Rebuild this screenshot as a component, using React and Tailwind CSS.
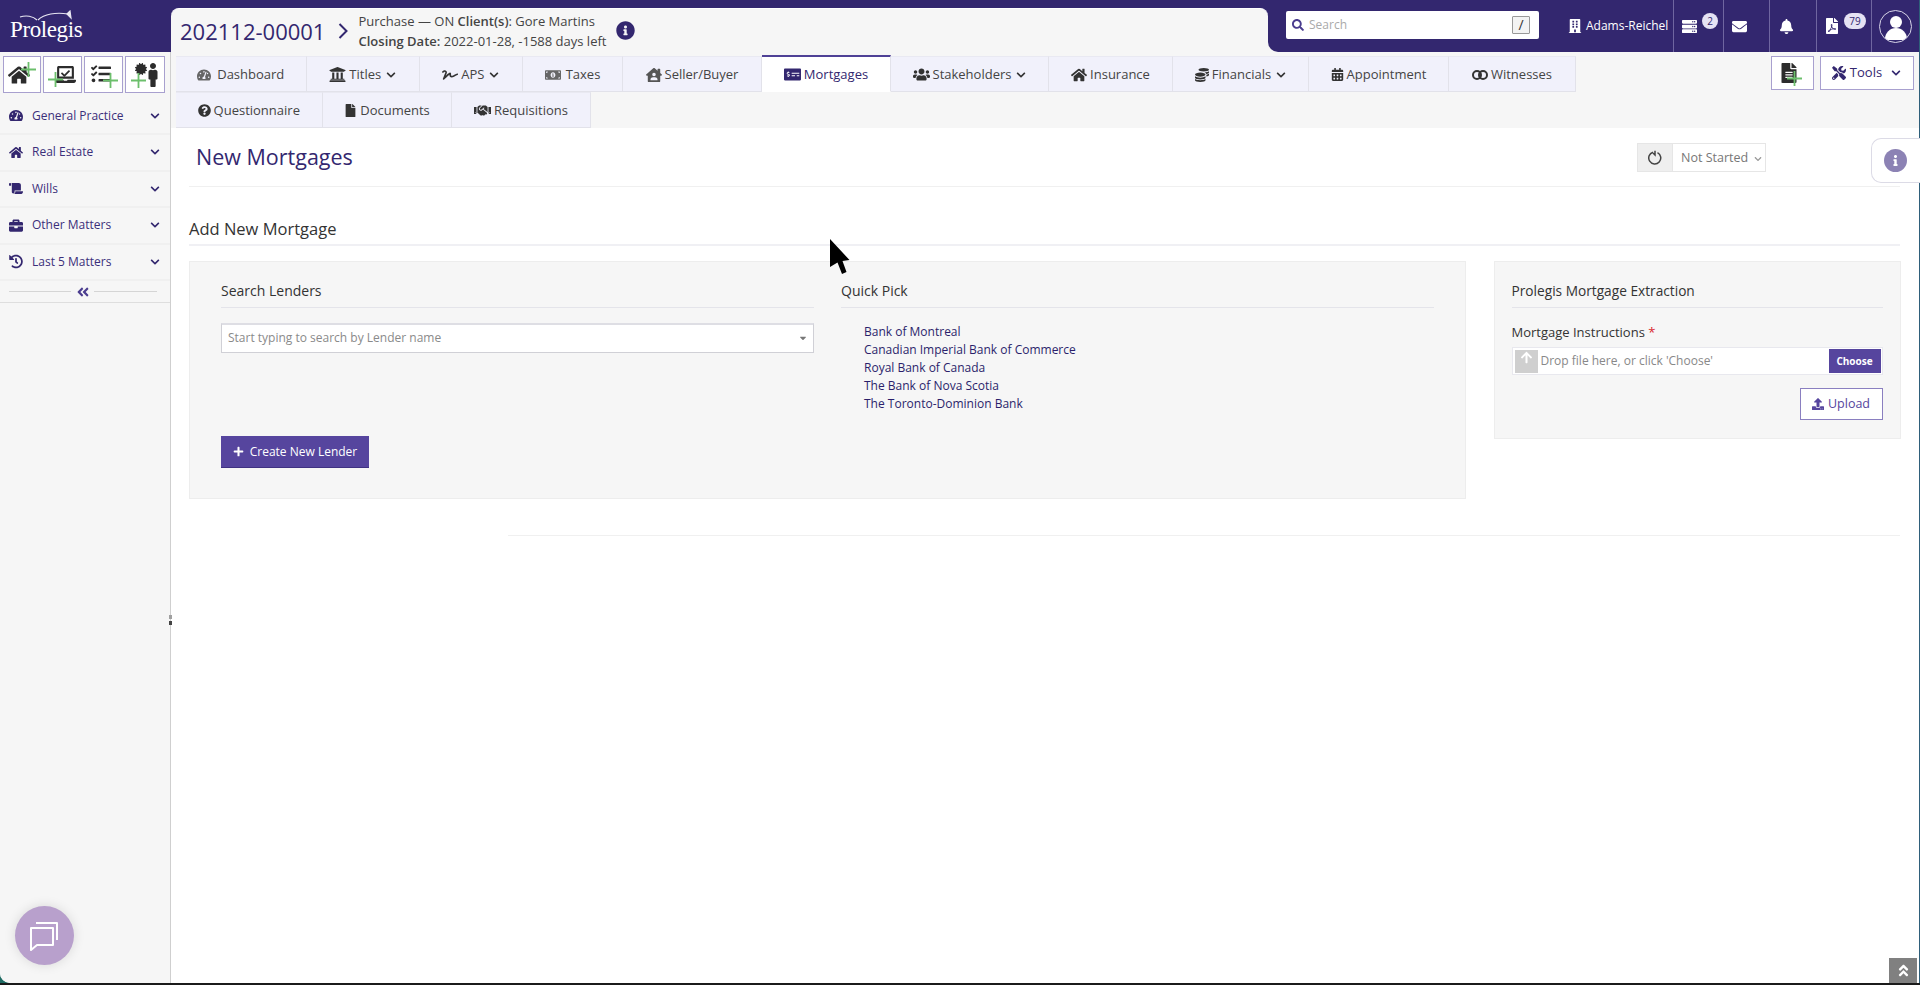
import React from 'react';
import {
  FaTachometerAlt, FaHome, FaScroll, FaBriefcase, FaHistory, FaAngleDoubleLeft, FaChevronDown,
  FaInfoCircle, FaUniversity, FaSignature, FaMoneyBillAlt, FaMoneyCheckAlt, FaUsers, FaCoins, FaCalendarAlt,
  FaQuestionCircle, FaFile, FaHandshake, FaSearch, FaBuilding, FaServer, FaEnvelope, FaBell, FaFilePdf, FaTools,
  FaFileAlt, FaCaretDown, FaPlus, FaUpload, FaAngleDoubleUp, FaTasks, FaMale, FaLaptop, FaInfo, FaArrowUp, FaHouseUser, FaCertificate, FaCheck,
} from 'react-icons/fa';

const Witness = () => (
  <svg width="16" height="12" viewBox="0 0 16 12" fill="none" stroke="#333" strokeWidth="2"><circle cx="5" cy="6" r="4" /><circle cx="11" cy="6" r="4" /></svg>
);

const row1 = [
  { w: 'w-[131.5px]', label: 'Dashboard', icon: <FaTachometerAlt className="text-[14px] text-[#666]" />, gap: 'gap-[6px]' },
  { w: 'w-[112.6px]', label: 'Titles', icon: <FaUniversity className="text-[17px]" />, chev: true },
  { w: 'w-[103.4px]', label: 'APS', icon: <FaSignature className="text-[16px]" />, chev: true },
  { w: 'w-[100px]', label: 'Taxes', icon: <FaMoneyBillAlt className="text-[16px] text-[#666]" />, gap: 'gap-[5px]' },
  { w: 'w-[139px]', label: 'Seller/Buyer', icon: <FaHouseUser className="text-[16px] text-[#555]" /> },
  { w: 'w-[129px]', label: 'Mortgages', icon: <FaMoneyCheckAlt className="text-[17px] text-[#33276f]" />, active: true },
  { w: 'w-[158px]', label: 'Stakeholders', icon: <FaUsers className="text-[17px]" />, chev: true },
  { w: 'w-[124px]', label: 'Insurance', icon: <FaHome className="text-[16px]" /> },
  { w: 'w-[136px]', label: 'Financials', icon: <FaCoins className="text-[14px]" />, chev: true },
  { w: 'w-[140px]', label: 'Appointment', icon: <FaCalendarAlt className="text-[13px]" /> },
  { w: 'w-[127px]', label: 'Witnesses', icon: <Witness /> },
];
const row2 = [
  { w: 'w-[147.5px]', label: 'Questionnaire', icon: <FaQuestionCircle className="text-[13px]" /> },
  { w: 'w-[129px]', label: 'Documents', icon: <FaFile className="text-[13px]" /> },
  { w: 'w-[139px]', label: 'Requisitions', icon: <FaHandshake className="text-[17px]" /> },
];

function Tab({ t }) {
  return (
    <div className={`${t.w} shrink-0 flex items-center justify-center pt-[1px] text-[13px] border-r border-b ${t.gap || 'gap-[3px]'} ${t.active ? 'bg-white text-[#33276f] border-[#e2e2ea] border-t-2 border-t-[#4f4196] border-b-white -mt-[1px] h-[37px]' : 'h-[36px] bg-[#f1f1fb] text-[#444] border-[#e2e2ea] border-t border-t-[#e9e9f2]'}`}>
      <span className={t.active ? 'text-[#33276f] flex' : 'text-[#333] flex'}>{t.icon}</span>
      <span>{t.label}</span>
      {t.chev && <FaChevronDown className="text-[10px] ml-[2px] text-[#333]" />}
    </div>
  );
}

const Green = ({ className }) => (
  <svg className={className} width="15" height="15" viewBox="0 0 15 15"><path d="M7.5 0v15M0 7.5h15" stroke="#6cbf6c" strokeWidth="1.8" /></svg>
);

function Quick({ w, children }) {
  return <div className={`${w} h-[37px] relative flex items-center justify-center bg-white border border-[#a8a0cf] text-[#2c2c2c]`}>{children}</div>;
}

const menu = [
  { label: 'General Practice', icon: <FaTachometerAlt /> },
  { label: 'Real Estate', icon: <FaHome /> },
  { label: 'Wills', icon: <FaScroll /> },
  { label: 'Other Matters', icon: <FaBriefcase /> },
  { label: 'Last 5 Matters', icon: <FaHistory /> },
];

function HeaderCell({ w, children }) {
  return <div className={`${w} h-full relative flex items-center justify-center text-white border-l border-[#6f66a0]`}>{children}</div>;
}

const Badge = ({ className, children }) => (
  <span className={`absolute top-[13px] h-[16px] rounded-full bg-[#e5e2f3] text-[#33276f] text-[10px] flex items-center justify-center ${className}`}>{children}</span>
);

export default function App() {
  return (
    <div className="relative w-full h-[985px] overflow-hidden bg-[#1b1b1b] text-[#333] font-['Open_Sans',sans-serif]">
      <div className="absolute left-0 bottom-[2px] w-[16px] h-[12px] bg-[#1f6b63]" />
      <div className="relative h-[983px] flex flex-col bg-white overflow-hidden rounded-bl-[10px] border-r border-[#2f5f7a]">
        {/* header */}
        <div className="h-[52px] shrink-0 flex bg-[#f6f6f6]">
          <div className="w-[171px] shrink-0 bg-[#33276f] relative flex items-center pl-[10px] pt-[6px] text-white">
            <svg className="absolute left-[18px] top-[10px]" width="56" height="14" viewBox="0 0 56 14" fill="none" stroke="#e8e6f2" strokeWidth="1.2">
              <path d="M2 7 C8 5 15 6 19 10" />
              <path d="M20 10 C26 4 38 2 50 4" />
              <path d="M49 4 L52 1 L53 8 Z" fill="#e8e6f2" />
            </svg>
            <span className="font-['Liberation_Serif',serif] text-[23px] tracking-[-0.4px] leading-none">Prolegis</span>
          </div>
          <div className="w-[1097px] shrink-0 bg-[#33276f] pt-[8px]">
            <div className="h-[44px] bg-[#f6f6f6] rounded-t-[8px] flex items-center pl-[9px] border-t border-white">
              <span className="text-[22px] leading-none text-[#33276f] w-[158px] shrink-0 whitespace-nowrap">202112-00001</span>
              <svg className="shrink-0" width="10" height="16" viewBox="0 0 10 16" fill="none" stroke="#33276f" strokeWidth="2"><path d="M1.5 1l7 7-7 7" /></svg>
              <div className="ml-[10.5px] text-[13px] leading-[20px] text-[#444] w-[257px] shrink-0">
                <div>Purchase — ON <b className="font-semibold">Client(s)</b>: Gore Martins</div>
                <div><b className="font-semibold">Closing Date:</b> 2022-01-28, -1588 days left</div>
              </div>
              <FaInfoCircle className="text-[19px] text-[#33276f] shrink-0" />
            </div>
          </div>
          <div className="flex-1 bg-[#33276f] rounded-bl-[10px] flex items-stretch pl-[18px]">
            <div className="w-[253px] h-[28px] mt-[11px] bg-white rounded-[2px] flex items-center pl-[6px] pr-[9px] shrink-0">
              <FaSearch className="text-[12px] text-[#4b3d8f]" />
              <span className="ml-[5px] text-[12px] text-[#aaa] flex-1">Search</span>
              <span className="w-[18px] h-[18px] border border-[#999] bg-[#f3f3f3] rounded-[1px] flex items-center justify-center text-[14px] leading-none text-[#333]">/</span>
            </div>
            <div className="w-[134px] shrink-0 flex items-center pl-[29px] gap-[4px] text-white text-[12px]">
              <FaBuilding className="text-[14px] shrink-0" />
              <span>Adams-Reichel</span>
            </div>
            <HeaderCell w="w-[50px]"><FaServer className="text-[15px] -ml-[18px]" /><Badge className="w-[16px] left-[28px]">2</Badge></HeaderCell>
            <HeaderCell w="w-[46px]"><FaEnvelope className="text-[15px] -ml-[14px]" /></HeaderCell>
            <HeaderCell w="w-[47px]"><FaBell className="text-[15px] -ml-[14px]" /></HeaderCell>
            <HeaderCell w="w-[55px]"><FaFilePdf className="text-[16px] -ml-[24px]" /><Badge className="w-[22px] left-[27px]">79</Badge></HeaderCell>
            <HeaderCell w="flex-1">
              <div className="w-[33px] h-[33px] rounded-full border border-[#d8d5e8] overflow-hidden flex items-end justify-center relative">
                <div className="absolute top-[5px] left-[10px] w-[12px] h-[12px] rounded-full bg-white" />
                <div className="w-[22px] h-[12px] rounded-t-full bg-white mb-[2px]" />
              </div>
            </HeaderCell>
          </div>
        </div>

        <div className="flex-1 flex min-h-0">
          {/* sidebar */}
          <aside className="w-[171px] shrink-0 bg-[#f6f6f6] border-r border-[#cfcfcf] pt-[4px] relative">
            <div className="flex pl-[3px] gap-[2px]">
              <Quick w="w-[38px]"><FaHome className="text-[22px] -ml-[6px]" /><Green className="absolute right-[4px] top-[5px]" /></Quick>
              <Quick w="w-[39px]">
                <FaLaptop className="text-[21px] ml-[6px]" />
                <FaCheck className="absolute left-[17px] top-[12px] text-[9px] text-[#2c2c2c]" />
                <Green className="absolute left-[4px] bottom-[5px]" />
              </Quick>
              <Quick w="w-[39px]"><FaTasks className="text-[20px] -ml-[6px] -mt-[2px]" /><Green className="absolute right-[4px] bottom-[4px]" /></Quick>
              <Quick w="w-[40px]">
                <FaCertificate className="absolute left-[9px] top-[6px] text-[12px]" />
                <FaMale className="text-[24px] ml-[16px]" />
                <Green className="absolute left-[5px] bottom-[4px]" />
              </Quick>
            </div>
            <div className="mt-[5.5px]">
              {menu.map((m) => (
                <div key={m.label} className="h-[36.5px] border-b-2 border-[#f0f0f0] flex items-center pl-[9px] pr-[10px] text-[#3b2f7a]">
                  <span className="w-[14px] flex justify-center text-[15px] text-[#33276f]">{m.icon}</span>
                  <span className="ml-[9px] text-[12px] flex-1">{m.label}</span>
                  <FaChevronDown className="text-[10px] text-[#33276f]" />
                </div>
              ))}
            </div>
            <div className="h-[22px] border-b border-[#dedede] flex items-center pl-[9px]">
              <div className="w-[62px] h-px bg-[#d5d5d5]" />
              <div className="w-[23px] flex justify-center"><FaAngleDoubleLeft className="text-[14px] text-[#4b3d8f]" /></div>
              <div className="w-[63px] h-px bg-[#d5d5d5]" />
            </div>
            <span className="absolute -right-[2px] top-[563px] w-[3px] h-[4px] bg-[#a0a0a0]" />
            <span className="absolute -right-[2px] top-[569px] w-[3px] h-[4px] bg-[#444]" />
          </aside>

          {/* main */}
          <main className="flex-1 min-w-0 flex flex-col">
            <div className="h-[76px] shrink-0 bg-[#f6f6f6] flex pt-[4px] pl-[4.5px]">
              <div className="w-[1401px] shrink-0">
                <div className="flex">{row1.map((t) => <Tab key={t.label} t={t} />)}</div>
                <div className="flex">{row2.map((t) => <Tab key={t.label} t={t} />)}</div>
              </div>
              <div className="flex gap-[6px] ml-[194px]">
                <div className="relative w-[43px] h-[34px] bg-white border border-[#a8a0cf] flex items-center justify-center">
                  <FaFileAlt className="text-[20px] text-[#2c2c2c] -ml-[6px]" />
                  <Green className="absolute right-[11px] bottom-[3px]" />
                </div>
                <div className="w-[94px] h-[34px] bg-white border border-[#a8a0cf] flex items-center justify-center gap-[4px] text-[13px] text-[#33276f]">
                  <FaTools className="text-[14px]" /><span>Tools</span><FaChevronDown className="text-[10px] ml-[5px]" />
                </div>
              </div>
            </div>

            <div className="flex-1 bg-white pl-[18px] pr-[19px]">
              <div className="h-[59px] border-b border-[#f0f0f0] flex items-center justify-between pl-[7px] pr-[134px]">
                <h1 className="text-[21.5px] font-normal text-[#33276f] leading-none -mt-[1px]">New Mortgages</h1>
                <div className="flex h-[29px] mt-[1px] border border-[#e6e6e6]">
                  <div className="w-[35px] bg-[#efefef] border-r border-[#e6e6e6] flex items-center justify-center">
                    <svg width="14" height="15" viewBox="0 0 14 15" fill="none" stroke="#444" strokeWidth="1.5">
                      <path d="M5 2.2A6 6 0 1 0 9.5 2.6" />
                      <path d="M7 0.8v4.2l-2-2" />
                    </svg>
                  </div>
                  <div className="w-[92px] flex items-center pl-[8px] pt-[2px] text-[12.5px] text-[#777] bg-white">
                    <span className="flex-1">Not Started</span>
                    <FaChevronDown className="text-[8px] mr-[3px] text-[#999]" />
                  </div>
                </div>
              </div>

              <div className="h-[59px] border-b-2 border-[#f0f0f4] flex items-end pb-[3px]">
                <h2 className="text-[16.5px] font-normal text-[#333] leading-[24px]">Add New Mortgage</h2>
              </div>

              <div className="flex items-start gap-[27.5px] mt-[15px]">
                <section className="w-[1277px] shrink-0 h-[238px] bg-[#f6f6f6] border border-[#ededed] px-[31px] flex gap-[27px]">
                  <div className="w-[593px] shrink-0">
                    <h3 className="h-[46px] pt-[18px] border-b border-[#e4e4ea] text-[14px] font-normal text-[#333] leading-[21px]">Search Lenders</h3>
                    <div className="mt-[15px] h-[30px] bg-white border border-[#d0d0d6] border-t-2 border-t-[#dedee4] flex items-center pl-[6px] pr-[5px] pb-[2px]">
                      <span className="text-[12px] text-[#8a8a8a] flex-1">Start typing to search by Lender name</span>
                      <FaCaretDown className="text-[10px] text-[#777]" />
                    </div>
                    <button className="mt-[83px] w-[148px] h-[32px] bg-[#56459e] text-white text-[12px] flex items-center justify-center gap-[6px] border-b border-[#3f3182]">
                      <FaPlus className="text-[11px]" />Create New Lender
                    </button>
                  </div>
                  <div className="w-[593px] shrink-0">
                    <h3 className="h-[46px] pt-[18px] border-b border-[#e4e4ea] text-[14px] font-normal text-[#333] leading-[21px]">Quick Pick</h3>
                    <ul className="mt-[15px] pl-[23px] text-[12px] leading-[18px] text-[#2b1f6b]">
                      <li>Bank of Montreal</li>
                      <li>Canadian Imperial Bank of Commerce</li>
                      <li>Royal Bank of Canada</li>
                      <li>The Bank of Nova Scotia</li>
                      <li>The Toronto-Dominion Bank</li>
                    </ul>
                  </div>
                </section>

                <section className="w-[407px] shrink-0 h-[178px] bg-[#f6f6f6] border border-[#ededed] px-[17px]">
                  <h3 className="h-[46px] pt-[18px] border-b border-[#e4e4ea] text-[13.7px] font-normal text-[#333] leading-[21px]">Prolegis Mortgage Extraction</h3>
                  <div className="mt-[15px] text-[13px] leading-[18px] text-[#333]">Mortgage Instructions <span className="text-[#d9262c]">*</span></div>
                  <div className="mt-[6px] h-[28px] bg-white border border-[#e8e8ee] flex items-center pl-[2px] pr-[1px]">
                    <div className="w-[23px] h-[23px] bg-[#cfcfcf] flex items-start justify-center shrink-0"><FaArrowUp className="text-[13px] text-white mt-[1px]" /></div>
                    <span className="ml-[3px] text-[12px] text-[#888] flex-1">Drop file here, or click 'Choose'</span>
                    <button className="w-[52px] h-[24px] bg-[#56459e] text-white text-[10px] font-bold">Choose</button>
                  </div>
                  <div className="flex justify-end mt-[13px]">
                    <button className="w-[83px] h-[32px] bg-white border border-[#8a7fc0] text-[#56459e] text-[12.5px] flex items-center justify-center gap-[4px]">
                      <FaUpload className="text-[12px]" />Upload
                    </button>
                  </div>
                </section>
              </div>

              <div className="ml-[319px] mt-[36px] h-px bg-[#f0f0f0]" />
            </div>
          </main>
        </div>
      </div>

      {/* info side tab */}
      <div className="absolute left-[1871px] top-[138px] w-[49px] h-[45px] bg-white border border-r-0 border-[#dcdbe6] rounded-l-[10px] flex items-center pl-[12px]">
        <span className="w-[23px] h-[23px] rounded-full bg-[#8c82b4] flex items-center justify-center"><FaInfo className="text-[11px] text-white" /></span>
      </div>

      {/* chat launcher */}
      <div className="absolute left-[14.5px] top-[906px] w-[59px] h-[59px] rounded-full bg-[#b8a0cc] shadow-[0_0_12px_rgba(0,0,0,0.12)] flex items-center justify-center">
        <svg width="32" height="30" viewBox="0 0 32 30" fill="none" stroke="white" strokeWidth="2" strokeLinejoin="round">
          <path d="M8 2h21v17" />
          <path d="M3 7h22v17H9l-6 5z" />
        </svg>
      </div>

      {/* scroll-to-top */}
      <div className="absolute left-[1889px] top-[958px] w-[28px] h-[25px] bg-[#808080] flex items-center justify-center">
        <FaAngleDoubleUp className="text-[15px] text-white" />
      </div>

      {/* pointer */}
      <svg className="absolute left-[830px] top-[239px]" width="20" height="36" viewBox="0 0 20 36">
        <path d="M0 0 L19.5 21 L12.5 22 L16.5 33 L12 35 L7.5 23.5 L0 28 Z" fill="#000" />
      </svg>
    </div>
  );
}
